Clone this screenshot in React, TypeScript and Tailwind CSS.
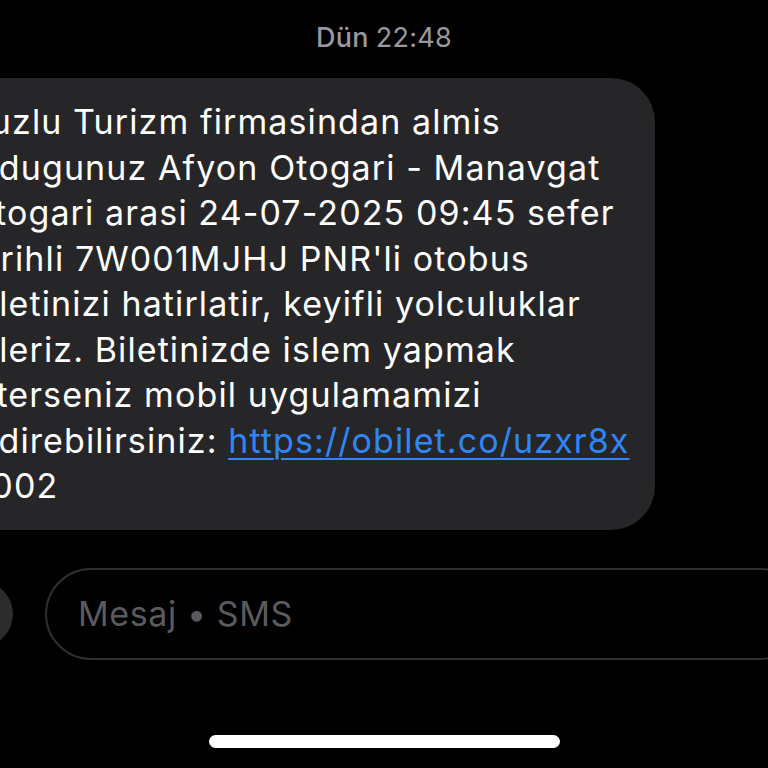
export default function App() {
  const lines = [
    "Kuzlu Turizm firmasindan almis",
    "oldugunuz Afyon Otogari - Manavgat",
    "Otogari arasi 24-07-2025 09:45 sefer",
    "tarihli 7W001MJHJ PNR'li otobus",
    "biletinizi hatirlatir, keyifli yolculuklar",
    "dileriz. Biletinizde islem yapmak",
    "isterseniz mobil uygulamamizi",
  ];

  return (
    <div className="w-[768px] h-[768px] bg-black overflow-hidden flex flex-col font-['Inter','Liberation_Sans',sans-serif]">
      {/* day + time */}
      <div className="h-[78px] shrink-0 flex items-center justify-center pb-[2px] text-[27px] tracking-[0.3px] text-[#98989d]">
        <span className="font-medium">Dün</span>
        <span className="ml-[7px]">22:48</span>
      </div>

      {/* incoming bubble */}
      <div className="-ml-[60px] w-[715px] shrink-0 rounded-[44px] bg-[#262628] pl-[28px] pr-[20px] py-[21px] text-[34px] leading-[45.5px] tracking-[1.1px] text-white">
        {lines.map((l) => (
          <div key={l} className="whitespace-nowrap">
            {l}
          </div>
        ))}
        <div className="whitespace-nowrap">
          indirebilirsiniz:{" "}
          <a href="#" className="text-[#2f86f6] underline decoration-2 underline-offset-[5px]">
            https://obilet.co/uzxr8x
          </a>
        </div>
        <div className="whitespace-nowrap">B002</div>
      </div>

      {/* composer */}
      <div className="mt-[38px] flex items-center shrink-0">
        <div className="-ml-[53px] w-[66px] h-[66px] shrink-0 rounded-full bg-[#2c2c2e]" />
        <div className="ml-[32px] w-[760px] h-[92px] shrink-0 rounded-full border-2 border-[#2e2e30] flex items-center pl-[31px] text-[34px] tracking-[0.6px] text-[#5b5b5f]">
          Mesaj • SMS
        </div>
      </div>

      {/* home indicator */}
      <div className="flex-1 flex items-end justify-center pb-[20px]">
        <div className="w-[351px] h-[13px] rounded-full bg-white" />
      </div>
    </div>
  );
}
